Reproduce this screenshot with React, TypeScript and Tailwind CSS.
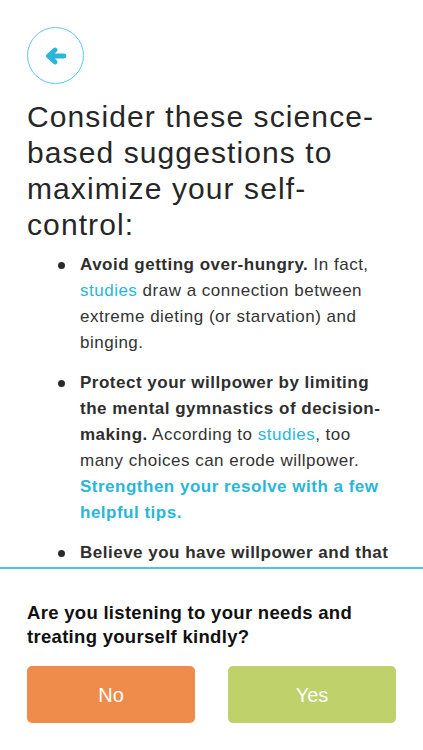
import React from 'react';

const font = { fontFamily: '"Liberation Sans", Arial, sans-serif' };

function BackButton() {
    return (
        <button
            className="w-[57px] h-[57px] rounded-full border border-[#5ccbde] flex items-center justify-center"
            aria-label="Back"
        >
            <svg width="22" height="18" viewBox="0 0 22 18" fill="none">
                <path
                    d="M19 9H4M10 3L3.5 9L10 15"
                    stroke="#2ab6d8"
                    strokeWidth="4.8"
                    strokeLinecap="round"
                    strokeLinejoin="round"
                />
            </svg>
        </button>
    );
}

function Bullet({ children }: { children: React.ReactNode }) {
    return (
        <li className="flex">
            <span className="w-[53px] shrink-0 flex justify-end pr-[15px] pt-[10px]">
                <span className="block w-[7px] h-[7px] rounded-full bg-[#2a2a2a]" />
            </span>
            <div className="flex-1">{children}</div>
        </li>
    );
}

export default function App() {
    return (
        <div className="w-[423px] h-[750px] bg-white flex flex-col overflow-hidden" style={font}>
            {/* scrolling content */}
            <div className="flex-1 overflow-hidden pt-[27px] px-[27px]">
                <BackButton />

                <h1 className="mt-[15px] text-[30px] leading-[36px] text-[#262626] tracking-[1.1px]">
                    Consider these science-
                    <br />
                    based suggestions to
                    <br />
                    maximize your self-
                    <br />
                    control:
                </h1>

                <ul className="mt-[9px] text-[17px] leading-[26px] text-[#333333] tracking-[0.5px] flex flex-col gap-[14px]">
                    <Bullet>
                        <b className="font-bold text-[#2e2e2e]">Avoid getting over-hungry.</b> In fact,
                        <br />
                        <span className="text-[#2ab6d8]">studies</span> draw a connection between
                        <br />
                        extreme dieting (or starvation) and
                        <br />
                        binging.
                    </Bullet>
                    <Bullet>
                        <b className="font-bold text-[#2e2e2e]">
                            Protect your willpower by limiting
                            <br />
                            the mental gymnastics of decision-
                            <br />
                            making.
                        </b>{' '}
                        According to <span className="text-[#2ab6d8]">studies</span>, too
                        <br />
                        many choices can erode willpower.
                        <br />
                        <b className="font-bold text-[#2ab6d8]">
                            Strengthen your resolve with a few
                            <br />
                            helpful tips.
                        </b>
                    </Bullet>
                    <Bullet>
                        <b className="font-bold text-[#2e2e2e]">Believe you have willpower and that</b>
                    </Bullet>
                </ul>
            </div>

            {/* question panel */}
            <div className="h-[183px] shrink-0 border-t-2 border-[#4fc4da] px-[27px] pt-[32px]">
                <p className="text-[18.5px] leading-[24px] font-bold text-[#111111] tracking-[0.3px]">
                    Are you listening to your needs and
                    <br />
                    treating yourself kindly?
                </p>
                <div className="mt-[17px] flex gap-[33px]">
                    <button className="w-[168px] h-[57px] rounded-[5px] bg-[#ef8c4b] text-white text-[20px]">
                        No
                    </button>
                    <button className="w-[168px] h-[57px] rounded-[5px] bg-[#bfd16b] text-white text-[20px]">
                        Yes
                    </button>
                </div>
            </div>
        </div>
    );
}
